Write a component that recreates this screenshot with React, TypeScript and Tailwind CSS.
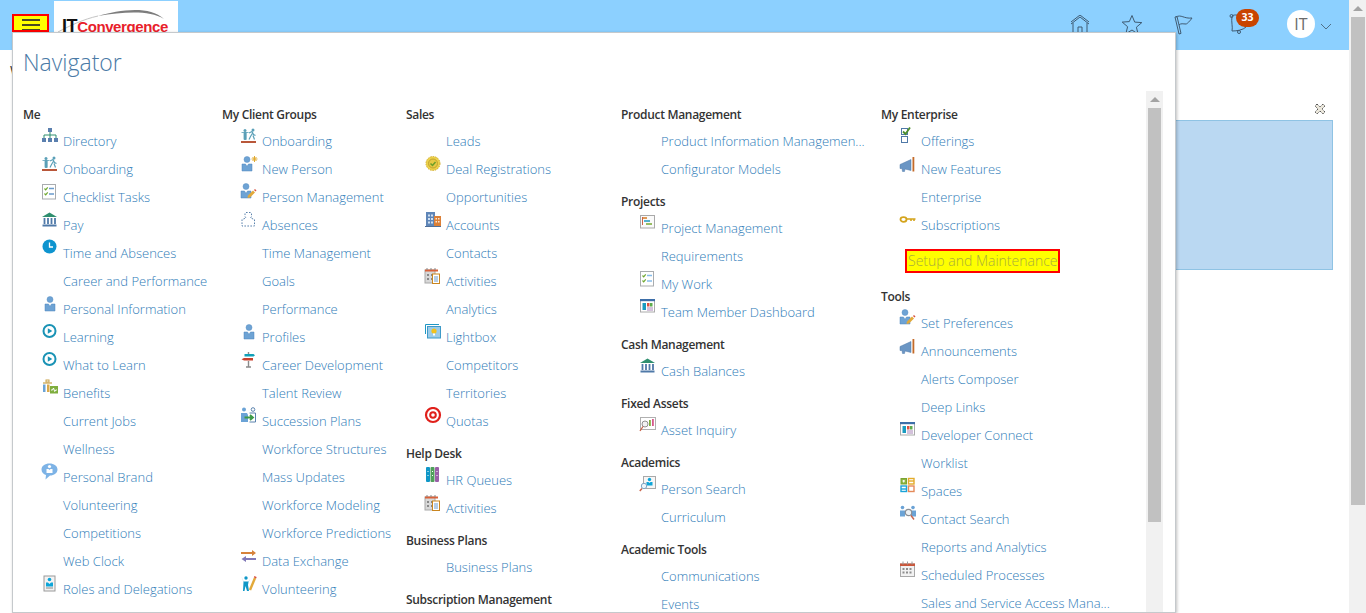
import React from "react";

type IconName = string;
const B = "#6ea3d4";
const D = "#4f79a8";
const G = "#2f8f6f";

function Person({ x = 0, y = 0 }: { x?: number; y?: number }) {
  return (
    <g transform={`translate(${x} ${y})`}>
      <circle cx="6" cy="3.5" r="3" fill={B} stroke="#5a90c4" strokeWidth=".5" />
      <path d="M1 8h3.500L6 10.500 7.500 8H11v7H1z" fill={B} stroke="#4f86bd" strokeWidth=".5" />
    </g>
  );
}
function Checklist({ light }: { light?: boolean }) {
  return (
    <>
      <rect x="1.500" y="1.500" width="13" height="14.500" fill="#fff" stroke="#a9acaf" />
      <path d="M3.500 5.500l1.200 1.300 2-2.500M3.500 10.500l1.200 1.300 2-2.500" stroke="#6ea82e" strokeWidth="1.200" fill="none" />
      <path d="M8 5.500h5M8 11h5" stroke={light ? "#86bdea" : "#6a9bcc"} strokeWidth="1.600" />
    </>
  );
}
function Bank() {
  return (
    <>
      <path d="M1 6L8.500 1.500 16 6z" fill={G} />
      <path d="M3.500 7v6M7 7v6M10.500 7v6M14 7v6" stroke={D} strokeWidth="1.800" />
      <path d="M1.500 14.500h14" stroke={D} strokeWidth="2" />
    </>
  );
}
function Play() {
  return (
    <>
      <circle cx="8.500" cy="8" r="6" fill="#fff" stroke="#1a93b5" strokeWidth="2" />
      <path d="M6.800 5.200l4.500 2.800-4.500 2.800z" fill="#1a93b5" />
    </>
  );
}
function Calendar() {
  return (
    <>
      <rect x="1" y="3" width="10" height="13" fill="#d8d8d8" stroke="#a8a8a8" />
      <path d="M1 2.500h13v2H1z" fill="#d9623a" />
      <path d="M3 1v2M7 1v2M11 1v2" stroke="#888" />
      <path d="M3 7h2v2H3zM7 7h2v2H7zM3 11h2v2H3zM7 11h2v2H7z" fill="#888" />
      <rect x="8.500" y="7" width="7" height="9.500" fill="#fff" stroke="#c9851f" />
      <path d="M10 10h4M10 12h4M10 14h4" stroke="#6a9bcc" />
    </>
  );
}
function Dash() {
  return (
    <>
      <rect x="1.500" y="1.500" width="14" height="12.500" fill="#fff" stroke="#aaa" />
      <rect x="1" y="1" width="15" height="2.200" fill="#3d6ea8" />
      <rect x="3.500" y="5" width="3.500" height="7" fill="#1a9bc0" />
      <rect x="8" y="5" width="2.500" height="3.500" fill="#d9503f" />
      <rect x="11" y="5" width="2.500" height="3.500" fill="#5dab4c" />
      <path d="M8 10h6M8 12h6" stroke="#a884b8" />
    </>
  );
}
function Mega() {
  return (
    <g transform="translate(0 2)">
      <path d="M1 7.500L12 2.500v11L6 12l-.5 2.500H3.500L3 11.500H1z" fill="#6b96c4" stroke="#4f79a8" strokeWidth=".5" />
      <rect x="13.500" y="0" width="1.800" height="14.500" fill="#c46a28" />
    </g>
  );
}
function PersonEdit() {
  return (
    <>
      <Person x={0} y={0} />
      <path d="M7.500 15l.5-2.500 5-5 2 2-5 5z" fill="#e2a93a" />
      <path d="M14.500 6.500L16 8" stroke="#d9503f" strokeWidth="1.500" />
    </>
  );
}

function Icon({ name }: { name: IconName }) {
  let c: React.ReactNode = null;
  switch (name) {
    case "org":
      c = (
        <>
          <path d="M9 4v4M3 11V8h12v3M9 8v3" stroke={G} fill="none" />
          <rect x="7" y="1" width="4" height="4" fill="#5a7fae" />
          <rect x="1" y="11" width="4" height="4" fill="#5a7fae" />
          <rect x="7" y="11" width="4" height="4" fill="#5a7fae" />
          <rect x="13" y="11" width="4" height="4" fill="#5a7fae" />
        </>
      );
      break;
    case "onboard":
      c = (
        <>
          <circle cx="5" cy="3.500" r="1.500" fill="#5ba0b8" />
          <path d="M1.500 5.500h7M4 5.500h2.200v7H4.900V10h-.1v2.500H4z" stroke="#5ba0b8" fill="#5ba0b8" strokeWidth=".8" />
          <circle cx="13" cy="3" r="1.500" fill="#5ba0b8" />
          <path d="M9 6l3-1.500 1.500 3 2 1M12.300 6.500l-1.800 3-1.500 3M13 8.500l1.500 4" stroke="#5ba0b8" strokeWidth="1.200" fill="none" />
          <rect x="1" y="14" width="15" height="2" fill="#b9573a" />
        </>
      );
      break;
    case "check":
      c = <Checklist />;
      break;
    case "checklight":
      c = <Checklist light />;
      break;
    case "bank":
      c = <Bank />;
      break;
    case "clock":
      c = (
        <>
          <circle cx="8.500" cy="7.500" r="7" fill="#0e94cf" />
          <path d="M8.500 3.500v4.500h3.500" stroke="#fff" strokeWidth="1.300" fill="none" />
        </>
      );
      break;
    case "person":
      c = <g transform="translate(3 1)"><Person /></g>;
      break;
    case "play":
      c = <Play />;
      break;
    case "benefits":
      c = (
        <>
          <path d="M2 4h9" stroke="#c9a24a" strokeWidth="1.200" />
          <rect x="5" y="1" width="3" height="2" fill="none" stroke="#c9a24a" />
          <rect x="2" y="5.500" width="2.500" height="7.500" fill="#6ba3d6" />
          <rect x="6" y="5.500" width="2.500" height="7.500" fill="#d9a94a" />
          <rect x="9" y="7" width="8" height="7.500" fill="#7fae3e" />
          <path d="M10 11h1.500l1-2 1.200 3.500 1-1.500h1.200" stroke="#fff" fill="none" />
        </>
      );
      break;
    case "brand":
      c = (
        <>
          <path d="M8.500 .5c4.500 0 8 2.400 8 6s-3.500 6-7.500 6l-4.500 4 .5-4.400C2.500 11.300 .5 9.500 .5 6.500c0-3.600 3.500-6 8-6z" fill="#7db3e6" />
          <circle cx="8.500" cy="3.500" r="1.600" fill="#fff" />
          <path d="M5.500 6h2l1 1 1-1h2v4h-6z" fill="#fff" />
        </>
      );
      break;
    case "roles":
      c = (
        <>
          <rect x="3" y="1" width="11" height="15" fill="#f3f3f3" stroke="#9a9a9a" />
          <circle cx="8.500" cy="4.500" r="1.800" fill="#0ea5d8" />
          <path d="M5 7.500h2l1.500 1.500 1.500-1.500h2v4H5z" fill="#0ea5d8" />
          <path d="M5 13h7" stroke="#8a8a8a" />
        </>
      );
      break;
    case "psearch":
      c = (
        <>
          <rect x="4.500" y="1.500" width="12" height="12" fill="#f6f6f6" stroke="#a9a9a9" />
          <circle cx="10.500" cy="4.500" r="1.700" fill="#0ea5d8" />
          <path d="M7.500 7h2l1 1 1-1h2v3.500h-6z" fill="#0ea5d8" />
          <circle cx="5" cy="11" r="2.700" fill="#eef5fa" stroke="#7fa6c4" />
          <path d="M3 13.500L.8 16" stroke="#c9634a" strokeWidth="1.400" />
        </>
      );
      break;
    case "newperson":
      c = (
        <>
          <g transform="translate(1 1)"><Person /></g>
          <path d="M14.500 1v6M11.500 4h6M12.500 2l4 4M16.500 2l-4 4" stroke="#e0a92e" strokeWidth="1" />
        </>
      );
      break;
    case "personedit":
      c = <PersonEdit />;
      break;
    case "dashed":
      c = (
        <path d="M6 1.500h4.500l1 1v3l-1 1.500 4 1.500v6.500H2V8.500L6 7 5 5.500v-3z" fill="none" stroke="#5a82ad" strokeDasharray="1.600 1.400" />
      );
      break;
    case "sign":
      c = (
        <>
          <path d="M8.500 1v3M8.500 10v6M6 16h5" stroke="#8a8a8a" strokeWidth="1.400" />
          <path d="M4.500 3h9l1.500 1.200-1.500 1.300h-9z" fill="#11a0b8" />
          <path d="M13 7H4L1.500 8.300 4 9.500h9z" fill="#c9402d" />
        </>
      );
      break;
    case "succession":
      c = (
        <>
          <circle cx="4" cy="2.500" r="2" fill="#6ba3d6" />
          <circle cx="13" cy="2.500" r="1.800" fill="none" stroke="#5a82ad" />
          <path d="M1 6h6l1 2v7H1z" fill="#6ba3d6" />
          <path d="M9.500 6h6v9h-6" fill="none" stroke="#5a82ad" />
          <path d="M4.500 10.500h7.500M10 8l3 2.500-3 2.500" stroke="#3d9a48" strokeWidth="1.800" fill="none" />
        </>
      );
      break;
    case "exchange":
      c = (
        <>
          <path d="M1 5h11V3l4 3-4 3V7H1z" fill="#d6823a" />
          <path d="M16 11H6V9l-4.500 3 4.500 3v-2h10z" fill="#8078b8" />
        </>
      );
      break;
    case "volunteer":
      c = (
        <>
          <circle cx="6" cy="3" r="1.700" fill="#0f97c7" />
          <path d="M1.500 1.500l2 5h5L10 4 8.500 7 8 10l1 6H7L5.500 11 4.500 16H3l.5-9z" fill="#0f97c7" />
          <path d="M10 15L15 3" stroke="#e2a93a" strokeWidth="2.400" />
          <path d="M15 3l.5-1.500" stroke="#d9503f" strokeWidth="2.400" />
        </>
      );
      break;
    case "deal":
      c = (
        <>
          <circle cx="9" cy="8.500" r="7" fill="#ecd14a" stroke="#d4ae2c" strokeDasharray="1.500 1" />
          <circle cx="9" cy="8.500" r="4.500" fill="#e6c945" stroke="#b8992a" strokeWidth=".8" />
          <path d="M6.500 8.500l2 2 3-3.500" stroke="#6c9e2a" strokeWidth="1.500" fill="none" />
        </>
      );
      break;
    case "accounts":
      c = (
        <>
          <rect x="2" y="1" width="9" height="14" fill="#5f86b8" />
          <path d="M4 3.500h2v2H4zM7 3.500h2v2H7zM4 7h2v2H4zM7 7h2v2H7zM4 10.500h2v2H4zM7 10.500h2v2H7z" fill="#cfe0f2" />
          <rect x="10" y="5" width="7" height="10" fill="#db7f36" />
          <path d="M11.500 7h1.500v1.500h-1.500zM14 7h1.500v1.500H14zM11.500 10h1.500v1.500h-1.500zM14 10h1.500v1.500H14z" fill="#fbe7d2" />
          <path d="M1 15.500h16" stroke="#4f6f99" />
        </>
      );
      break;
    case "calendar":
      c = <Calendar />;
      break;
    case "lightbox":
      c = (
        <>
          <path d="M1.500 11V1.500H15" stroke="#1f97c4" fill="none" />
          <rect x="3.500" y="3.500" width="13" height="11.500" fill="#9ccbe8" stroke="#3d9ac8" />
          <circle cx="10" cy="8" r="2.600" fill="#f3c21b" />
          <rect x="9" y="10.500" width="2" height="2" fill="#fff" />
        </>
      );
      break;
    case "target":
      c = (
        <>
          <circle cx="9" cy="8" r="7" fill="none" stroke="#e0201b" strokeWidth="2.200" />
          <circle cx="9" cy="8" r="2.800" fill="none" stroke="#e0201b" strokeWidth="2" />
        </>
      );
      break;
    case "queues":
      c = (
        <>
          <rect x="2" y="1" width="4" height="15" rx="1" fill="#0f97c7" />
          <rect x="6.500" y="1" width="4" height="15" rx="1" fill="#4f9f5a" />
          <rect x="11" y="1" width="4" height="15" rx="1" fill="#9a5fa8" />
          <path d="M4 5v1M4 9v1M8.500 5v1M8.500 9v1M13 5v1M13 9v1" stroke="#fff" />
        </>
      );
      break;
    case "project":
      c = (
        <>
          <rect x="1.500" y="1.500" width="14" height="12.500" fill="#fafafa" stroke="#a9a9a9" />
          <path d="M4 4h4" stroke="#d9822b" strokeWidth="1.600" />
          <path d="M5 7h6" stroke="#2a9fc4" strokeWidth="1.600" />
          <path d="M7 10h6" stroke="#7fae3e" strokeWidth="1.600" />
          <path d="M3.500 3v8" stroke="#c9634a" />
        </>
      );
      break;
    case "dash":
      c = <Dash />;
      break;
    case "asset":
      c = (
        <>
          <rect x="1.500" y="1.500" width="15" height="12" fill="#fff" stroke="#b0b0b0" />
          <rect x="10" y="4" width="1.800" height="6" fill="#7fae3e" />
          <rect x="13" y="3" width="1.800" height="7" fill="#d65a8a" />
          <circle cx="6" cy="8" r="3" fill="#f2f2f2" stroke="#909090" />
          <path d="M4 10.500L1 15" stroke="#c9634a" strokeWidth="1.300" />
        </>
      );
      break;
    case "offer":
      c = (
        <>
          <rect x="2.500" y="1.500" width="6" height="6" fill="none" stroke="#4f79a8" />
          <rect x="2.500" y="9.500" width="6" height="6" fill="#fff" stroke="#4f79a8" />
          <path d="M4 4.500l2.500 2.500L11 .5" stroke="#4d8f2e" strokeWidth="1.800" fill="none" />
        </>
      );
      break;
    case "mega":
      c = <Mega />;
      break;
    case "key":
      c = (
        <>
          <ellipse cx="4.500" cy="8.500" rx="3" ry="2.300" fill="#fff" stroke="#d4a41c" strokeWidth="1.800" />
          <path d="M7.500 8h9M12 8v2M15 8v2" stroke="#d4a41c" strokeWidth="1.600" />
        </>
      );
      break;
    case "spaces":
      c = (
        <>
          <rect x="2" y="1.500" width="5.500" height="5.500" fill="#8ab53f" stroke="#7ba332" />
          <path d="M3.500 4h2.500M4.700 3v2.500" stroke="#fff" />
          <rect x="9.500" y="1.500" width="5.500" height="5.500" fill="none" stroke="#e3ab2a" strokeWidth="1.400" />
          <path d="M9.500 4h5.500" stroke="#e3ab2a" strokeWidth="1.400" />
          <rect x="2" y="9" width="5.500" height="5.500" fill="none" stroke="#1aa3d8" strokeWidth="1.400" />
          <path d="M2 12h5.500" stroke="#1aa3d8" strokeWidth="1.400" />
          <rect x="9.500" y="9" width="5.500" height="5.500" fill="none" stroke="#e48a5a" strokeWidth="1.400" />
        </>
      );
      break;
    case "contact":
      c = (
        <>
          <circle cx="3.500" cy="2.500" r="1.800" fill="#6ba3d6" />
          <circle cx="14" cy="2.500" r="1.800" fill="#6ba3d6" />
          <path d="M1 5.500h5v6H1zM12 5.500h5v6h-5z" fill="#6ba3d6" />
          <circle cx="9.500" cy="7.500" r="3.200" fill="#eef2f5" stroke="#8a8f95" strokeWidth="1.200" />
          <path d="M12 10.500l3 4" stroke="#c9634a" strokeWidth="1.400" />
        </>
      );
      break;
    case "sched":
      c = (
        <>
          <rect x="1.500" y="3" width="14" height="12.500" fill="#f2f2f2" stroke="#a8a8a8" />
          <rect x="1" y="2.500" width="15" height="2.500" fill="#c9563a" />
          <path d="M4 .5v3M8.500 .5v3M13 .5v3" stroke="#999" />
          <path d="M3.500 7h2v2h-2zM7 7h2v2H7zM10.500 7h2v2h-2zM3.500 10.500h2v2h-2zM7 10.500h2v2H7zM10.500 10.500h2v2h-2z" fill="#8d8d8d" />
        </>
      );
      break;
  }
  return (
    <svg width="18" height="18" viewBox="0 0 18 18" className="absolute left-0 top-0">
      {c}
    </svg>
  );
}

type Item = { t: string; i?: string; hl?: boolean };
type Group = { title: string; items: Item[] };

const cols: { w: string; groups: Group[] }[] = [
  {
    w: "w-[199px]",
    groups: [
      {
        title: "Me",
        items: [
          { t: "Directory", i: "org" },
          { t: "Onboarding", i: "onboard" },
          { t: "Checklist Tasks", i: "check" },
          { t: "Pay", i: "bank" },
          { t: "Time and Absences", i: "clock" },
          { t: "Career and Performance" },
          { t: "Personal Information", i: "person" },
          { t: "Learning", i: "play" },
          { t: "What to Learn", i: "play" },
          { t: "Benefits", i: "benefits" },
          { t: "Current Jobs" },
          { t: "Wellness" },
          { t: "Personal Brand", i: "brand" },
          { t: "Volunteering" },
          { t: "Competitions" },
          { t: "Web Clock" },
          { t: "Roles and Delegations", i: "roles" },
          { t: "Expenses" },
        ],
      },
    ],
  },
  {
    w: "w-[184px]",
    groups: [
      {
        title: "My Client Groups",
        items: [
          { t: "Onboarding", i: "onboard" },
          { t: "New Person", i: "newperson" },
          { t: "Person Management", i: "personedit" },
          { t: "Absences", i: "dashed" },
          { t: "Time Management" },
          { t: "Goals" },
          { t: "Performance" },
          { t: "Profiles", i: "person" },
          { t: "Career Development", i: "sign" },
          { t: "Talent Review" },
          { t: "Succession Plans", i: "succession" },
          { t: "Workforce Structures" },
          { t: "Mass Updates" },
          { t: "Workforce Modeling" },
          { t: "Workforce Predictions" },
          { t: "Data Exchange", i: "exchange" },
          { t: "Volunteering", i: "volunteer" },
        ],
      },
    ],
  },
  {
    w: "w-[215px]",
    groups: [
      {
        title: "Sales",
        items: [
          { t: "Leads" },
          { t: "Deal Registrations", i: "deal" },
          { t: "Opportunities" },
          { t: "Accounts", i: "accounts" },
          { t: "Contacts" },
          { t: "Activities", i: "calendar" },
          { t: "Analytics" },
          { t: "Lightbox", i: "lightbox" },
          { t: "Competitors" },
          { t: "Territories" },
          { t: "Quotas", i: "target" },
        ],
      },
      { title: "Help Desk", items: [{ t: "HR Queues", i: "queues" }, { t: "Activities", i: "calendar" }] },
      { title: "Business Plans", items: [{ t: "Business Plans" }] },
      { title: "Subscription Management", items: [] },
    ],
  },
  {
    w: "w-[260px]",
    groups: [
      { title: "Product Management", items: [{ t: "Product Information Managemen..." }, { t: "Configurator Models" }] },
      {
        title: "Projects",
        items: [
          { t: "Project Management", i: "project" },
          { t: "Requirements" },
          { t: "My Work", i: "checklight" },
          { t: "Team Member Dashboard", i: "dash" },
        ],
      },
      { title: "Cash Management", items: [{ t: "Cash Balances", i: "bank" }] },
      { title: "Fixed Assets", items: [{ t: "Asset Inquiry", i: "asset" }] },
      { title: "Academics", items: [{ t: "Person Search", i: "psearch" }, { t: "Curriculum" }] },
      { title: "Academic Tools", items: [{ t: "Communications" }, { t: "Events" }] },
    ],
  },
  {
    w: "w-[265px]",
    groups: [
      {
        title: "My Enterprise",
        items: [
          { t: "Offerings", i: "offer" },
          { t: "New Features", i: "mega" },
          { t: "Enterprise" },
          { t: "Subscriptions", i: "key" },
          { t: "Setup and Maintenance", hl: true },
        ],
      },
      {
        title: "Tools",
        items: [
          { t: "Set Preferences", i: "personedit" },
          { t: "Announcements", i: "mega" },
          { t: "Alerts Composer" },
          { t: "Deep Links" },
          { t: "Developer Connect", i: "dash" },
          { t: "Worklist" },
          { t: "Spaces", i: "spaces" },
          { t: "Contact Search", i: "contact" },
          { t: "Reports and Analytics" },
          { t: "Scheduled Processes", i: "sched" },
          { t: "Sales and Service Access Mana..." },
        ],
      },
    ],
  },
];

function Row({ item }: { item: Item }) {
  if (item.hl) {
    return (
      <div className="h-[39px] pl-[24px] pt-[10px]">
        <div className="flex h-[24px] w-[155px] items-center whitespace-nowrap border-2 border-[#ff0000] bg-[#ffff00] pl-[1px] text-[14px] text-[#a8ad3c]">
          {item.t}
        </div>
      </div>
    );
  }
  return (
    <div className="relative flex h-[28px] items-center whitespace-nowrap pl-[40px] text-[#2f7cb8]">
      {item.i && (
        <span className="absolute left-[18px] top-0 h-[18px] w-[18px]">
          <Icon name={item.i} />
        </span>
      )}
      {item.t}
    </div>
  );
}

function SbArrow() {
  return <div className="h-0 w-0 border-x-[5px] border-b-[5px] border-x-transparent border-b-[#a3a3a3]" />;
}

export default function App() {
  return (
    <div
      className="relative flex h-[613px] w-full overflow-hidden bg-white"
      style={{ fontFamily: '"Open Sans", "Noto Sans", Arial, sans-serif' }}
    >
      <div className="flex min-w-0 flex-1 flex-col">
        <header className="flex h-[50px] shrink-0 bg-[#8cd0ff] pl-[12px] pr-[17px]">
          <button className="mt-[14px] flex h-[18px] w-[37px] flex-col items-center gap-[3px] overflow-hidden border-2 border-[#ff0000] bg-[#ffff00] pt-[3px]">
            <span className="h-[2px] w-[18px] shrink-0 bg-[#4a4a22]" />
            <span className="h-[2px] w-[18px] shrink-0 bg-[#4a4a22]" />
            <span className="h-[2px] w-[18px] shrink-0 bg-[#4a4a22]" />
          </button>
          <div className="relative ml-[5px] mt-[1px] h-[31px] w-[124px] overflow-hidden bg-white">
            <svg width="124" height="31" className="absolute left-0 top-0">
              <path d="M4 31C15 25 30 18 44 15" stroke="#c4c4c4" fill="none" />
              <path d="M44 15C65 9 95 4 110 18C95 9 70 11 44 15z" fill="#7d7d7d" />
            </svg>
            <div
              className="absolute left-[8px] top-[14px] whitespace-nowrap text-[15px] font-bold leading-[22px] tracking-[-0.4px] text-[#e8202a]"
              style={{ fontFamily: '"Liberation Sans", Arial, sans-serif' }}
            >
              <span className="text-[18px] text-[#111]">IT</span>Convergence
            </div>
          </div>
          <div className="ml-auto flex items-start">
            <svg width="22" height="22" viewBox="0 0 22 22" fill="none" stroke="#3f5b73" strokeWidth="1" className="mt-[15px]">
              <path d="M2 9l9-7 9 7M4 8v13h14V8M2 7l9-7 9 7M9 21v-9h4v9" />
            </svg>
            <svg width="22" height="22" viewBox="0 0 22 22" fill="none" stroke="#3f5b73" strokeWidth="1" className="ml-[30px] mt-[14px]">
              <path d="M11 1.500l2.700 6.600 7.100.5-5.400 4.600 1.700 7L11 16l-6.100 3.700 1.700-7L1.200 8.100l7.100-.5z" />
            </svg>
            <svg width="22" height="22" viewBox="0 0 22 22" fill="none" stroke="#3f5b73" strokeWidth="1" className="ml-[30px] mt-[14px]">
              <path d="M2 3l4 17 2-.6L4 2.500zM3 3c5-3 8 2 16 1-2 3-5 6-6 6-3 0-5-1-7 1" />
            </svg>
            <div className="relative ml-[34px] mt-[9px] h-[27px] w-[30px]">
              <svg width="20" height="22" viewBox="0 0 20 22" fill="none" stroke="#3f5b73" strokeWidth="1" className="absolute left-0 top-[4px]">
                <path d="M3 3c3-2 7-1 9 2 3 3 4 7 5 9-3 3-9 4-14 4 1-4-1-9 0-15z" />
                <circle cx="2.500" cy="3" r="1.500" />
                <circle cx="10" cy="19" r="1.500" />
              </svg>
              <span className="absolute left-[7px] top-0 flex h-[18px] w-[23px] items-center justify-center rounded-full bg-[#c94400] text-[10.500px] font-bold text-white">
                33
              </span>
            </div>
            <div className="ml-[28px] mt-[10px] flex h-[28px] w-[28px] items-center justify-center rounded-full bg-white text-[16px] text-[#6b6b6b]">
              IT
            </div>
            <svg width="12" height="7" viewBox="0 0 12 7" fill="none" stroke="#4f6f88" className="ml-[5px] mt-[23px]">
              <path d="M1 1l5 5 5-5" />
            </svg>
          </div>
        </header>
        <main className="flex flex-col pl-[10px] pr-[16px]">
          <div className="mt-[11px] h-[20px] text-[14px] leading-[20px] text-[#333]">Welcome</div>
          <div className="mr-[7px] mt-[22px] flex justify-end">
            <svg width="12" height="12" viewBox="0 0 12 12">
              <path d="M3 1l3 3 3-3 2 2-3 3 3 3-2 2-3-3-3 3-2-2 3-3-3-3z" fill="#ece8dc" stroke="#555" strokeWidth="1" strokeDasharray="1.500 .8" />
            </svg>
          </div>
          <div className="ml-auto mt-[5px] h-[150px] w-[400px] border border-[#8fc3e4] bg-[#bad8f2]" />
        </main>
      </div>

      <div className="flex w-[17px] shrink-0 flex-col items-center bg-[#f1f1f1]">
        <div className="flex h-[17px] items-center justify-center">
          <SbArrow />
        </div>
        <div className="h-[488px] w-[14px] bg-[#c1c1c1]" />
      </div>

      <section className="absolute left-[12px] top-[32px] flex h-[581px] w-[1164px] flex-col border border-[#c5c9cc] bg-white shadow-[1px_1px_3px_rgba(0,0,0,0.25)]">
        <h1 className="h-[58px] shrink-0 pl-[10px] pt-[12px] text-[23px] font-light leading-[34px] text-[#4a7aa6]">
          Navigator
        </h1>
        <div className="flex min-h-0 flex-1 pr-[12px]">
          <div className="flex min-w-0 flex-1 overflow-hidden pl-[10px] pt-[12px] text-[13px] font-light leading-[20px]">
            {cols.map((col) => (
              <div key={col.groups[0].title} className={`${col.w} flex shrink-0 flex-col gap-[7px]`}>
                {col.groups.map((g) => (
                  <div key={g.title}>
                    <div className="flex h-[24px] items-center whitespace-nowrap text-[12px] font-semibold tracking-[-0.3px] text-[#333]">
                      {g.title}
                    </div>
                    {g.items.map((it, i) => (
                      <Row key={i} item={it} />
                    ))}
                  </div>
                ))}
              </div>
            ))}
          </div>
          <div className="flex w-[17px] shrink-0 flex-col items-center bg-[#f1f1f1]">
            <div className="flex h-[17px] items-center justify-center">
              <SbArrow />
            </div>
            <div className="h-[414px] w-[13px] bg-[#c1c1c1]" />
          </div>
        </div>
      </section>
    </div>
  );
}
